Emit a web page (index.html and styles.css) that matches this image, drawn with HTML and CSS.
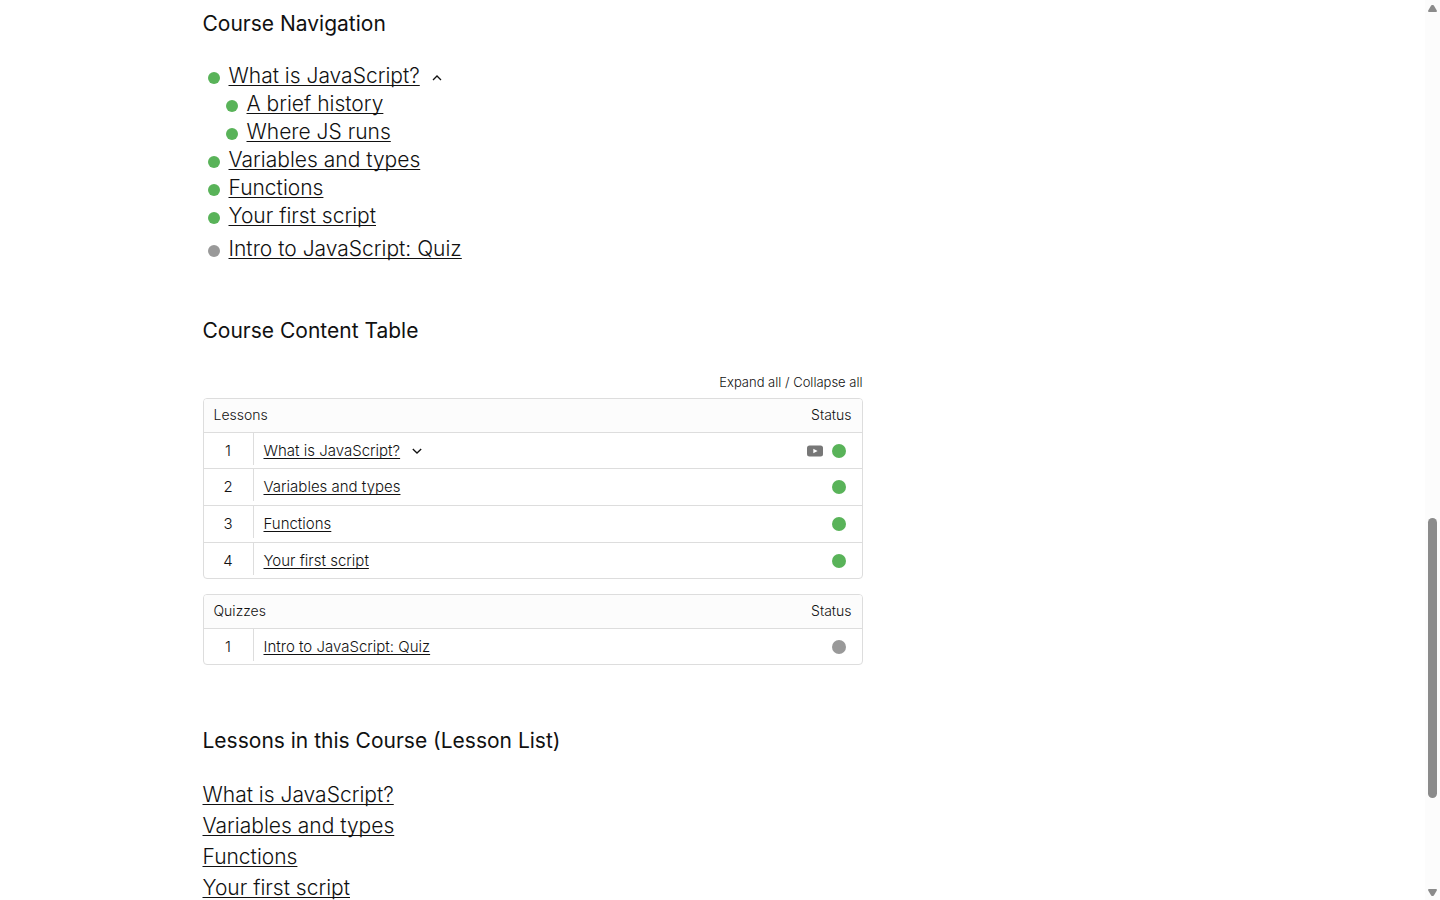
FILE: index.html
```html
<!DOCTYPE html>
<html lang="en">
<head>
<meta charset="utf-8">
<meta name="viewport" content="width=device-width, initial-scale=1">
<title>Intro to JavaScript</title>
<link rel="stylesheet" href="styles.css">
</head>
<body>
<div class="viewport">
  <main class="page">
    <div class="container">
      <section class="nav-section">
        <h2 class="heading">Course Navigation</h2>
        <nav aria-label="Course navigation">
          <ul class="course-nav">
            <li>
              <div class="nav-row"><span class="dot done"></span><a href="#">What is JavaScript?</a><button class="toggle" type="button" aria-label="Collapse topics"><svg width="10" height="10" viewBox="0 0 10 10"><path d="M1 7 5 3 9 7"/></svg></button></div>
              <ul class="topics">
                <li class="nav-row"><span class="dot done"></span><a href="#">A brief history</a></li>
                <li class="nav-row"><span class="dot done"></span><a href="#">Where JS runs</a></li>
              </ul>
            </li>
            <li class="nav-row"><span class="dot done"></span><a href="#">Variables and types</a></li>
            <li class="nav-row"><span class="dot done"></span><a href="#">Functions</a></li>
            <li class="nav-row"><span class="dot done"></span><a href="#">Your first script</a></li>
            <li class="nav-row quiz"><span class="dot"></span><a href="#">Intro to JavaScript: Quiz</a></li>
          </ul>
        </nav>
      </section>

      <section class="content-section">
        <h2 class="heading">Course Content Table</h2>
        <div class="tables">
          <div class="expand"><button type="button">Expand all</button> / <button type="button">Collapse all</button></div>
          <table class="content-table">
            <thead><tr><th colspan="2" scope="col">Lessons</th><th class="status" scope="col">Status</th></tr></thead>
            <tbody>
              <tr>
                <td class="number"><span>1</span></td>
                <td><div class="title"><a href="#">What is JavaScript?</a><button class="toggle" type="button" aria-label="Expand topics"><svg width="10" height="10" viewBox="0 0 10 10"><path d="M.8 3 5 7 9.200 3"/></svg></button></div></td>
                <td><div class="state"><svg class="video" width="16" height="12" viewBox="0 0 16 12" role="img" aria-label="Video"><rect width="16" height="11" y=".5" rx="2.500"/><path d="M6.300 3.800v4.400L10.600 6z"/></svg><span class="dot done"></span></div></td>
              </tr>
              <tr>
                <td class="number"><span>2</span></td>
                <td><div class="title"><a href="#">Variables and types</a></div></td>
                <td><div class="state"><span class="dot done"></span></div></td>
              </tr>
              <tr>
                <td class="number"><span>3</span></td>
                <td><div class="title"><a href="#">Functions</a></div></td>
                <td><div class="state"><span class="dot done"></span></div></td>
              </tr>
              <tr>
                <td class="number"><span>4</span></td>
                <td><div class="title"><a href="#">Your first script</a></div></td>
                <td><div class="state"><span class="dot done"></span></div></td>
              </tr>
            </tbody>
          </table>
          <table class="content-table">
            <thead><tr><th colspan="2" scope="col">Quizzes</th><th class="status" scope="col">Status</th></tr></thead>
            <tbody>
              <tr>
                <td class="number"><span>1</span></td>
                <td><div class="title"><a href="#">Intro to JavaScript: Quiz</a></div></td>
                <td><div class="state"><span class="dot"></span></div></td>
              </tr>
            </tbody>
          </table>
        </div>
      </section>

      <section>
        <h2 class="heading">Lessons in this Course (Lesson List)</h2>
        <ul class="lesson-list">
          <li><a href="#">What is JavaScript?</a></li>
          <li><a href="#">Variables and types</a></li>
          <li><a href="#">Functions</a></li>
          <li><a href="#">Your first script</a></li>
        </ul>
      </section>
    </div>
  </main>
  <div class="scrollbar" aria-hidden="true">
    <svg width="9" height="7" viewBox="0 0 9 7"><path d="M4 0h1q.6 0 1 .7L8.800 5.500Q9.300 7 8 7H1Q-.3 7 .2 5.500L3 .7Q3.400 0 4 0z"/></svg>
    <div class="track"><div class="thumb"></div></div>
    <svg width="9" height="7" viewBox="0 0 9 7"><path d="M4 7h1q.6 0 1-.7L8.800 1.500Q9.300 0 8 0H1Q-.3 0 .2 1.500L3 6.300Q3.400 7 4 7z"/></svg>
  </div>
</div>
</body>
</html>
```
FILE: styles.css
```css
* { box-sizing: border-box; }

body {
  margin: 0;
  background: #fff;
  color: #111;
  font-family: Inter, "Open Sans", sans-serif;
  font-size: 21px;
  font-weight: 300;
}

ul { list-style: none; margin: 0; padding: 0; }

a {
  color: inherit;
  text-decoration: underline;
  text-decoration-thickness: 1px;
  text-decoration-skip-ink: none;
  text-underline-offset: 2px;
}

button {
  margin: 0;
  padding: 0;
  border: 0;
  background: none;
  color: inherit;
  font: inherit;
  cursor: pointer;
}

.viewport {
  display: grid;
  grid-template-columns: 1fr 15px;
  height: 100vh;
}

.page { overflow: hidden; }

.container {
  max-width: 1020px;
  margin: 0 auto;
  padding-top: 9px;
}

.heading {
  margin: 0;
  font-size: 21px;
  font-weight: 400;
  line-height: 30px;
}

.nav-section { margin-bottom: 53px; }
.content-section { margin-bottom: 61px; }

.course-nav { padding: 23px 0 0 5px; }
.topics { padding-left: 18px; }

.nav-row {
  display: flex;
  align-items: center;
  line-height: 28px;
}

.nav-row.quiz { margin-top: 5px; }

.dot {
  flex: none;
  width: 12px;
  height: 12px;
  margin-top: 3px;
  border-radius: 50%;
  background: #999;
}

.dot.done { background: #59b359; }
.nav-row .dot { margin-right: 9px; }

.toggle {
  display: flex;
  margin-left: 12px;
}

.nav-row .toggle { margin-top: 3px; }

.toggle path {
  fill: none;
  stroke: #111;
  stroke-width: 1.3px;
}

.tables {
  max-width: 660px;
  padding-top: 26px;
  font-size: 15px;
}

.expand {
  margin-bottom: 6px;
  font-size: 13px;
  line-height: 20px;
  text-align: right;
}

.content-table {
  width: 100%;
  margin-bottom: 15px;
  border: 1px solid #ddd;
  border-radius: 4px;
  border-spacing: 0;
  overflow: hidden;
}

.content-table th {
  height: 33px;
  padding: 0 10px 2px;
  background: #fcfcfc;
  font-size: 14px;
  font-weight: 300;
  text-align: left;
}

.content-table th.status { text-align: right; }

.content-table td {
  height: 36px;
  padding: 0 10px;
  border-top: 1px solid #ddd;
  vertical-align: top;
}

.content-table tr:not(:first-child):not(:last-child) td { height: 37px; }

.content-table .number {
  width: 50px;
  padding: 0;
  text-align: center;
}

.number span {
  display: block;
  height: 32px;
  border-right: 1px solid #ddd;
  line-height: 35px;
}

.title, .state {
  display: flex;
  align-items: center;
  height: 35px;
}

.state {
  justify-content: flex-end;
  gap: 9px;
  padding-right: 6px;
}

.state .dot {
  width: 14px;
  height: 14px;
  margin-top: 1px;
}

.video {
  margin-top: 1px;
  fill: #777;
}

.video path { fill: #fff; }

.lesson-list {
  padding-top: 23px;
  line-height: 31px;
}

.scrollbar {
  display: flex;
  flex-direction: column;
  align-items: center;
  padding: 5px 0 4px;
  background: #fcfcfc;
  fill: #8b8b8b;
}

.track {
  flex: 1;
  display: grid;
  grid-template-rows: 506fr 280fr 91fr;
}

.thumb {
  grid-row: 2;
  width: 9px;
  border-radius: 5px;
  background: #8b8b8b;
}
```
